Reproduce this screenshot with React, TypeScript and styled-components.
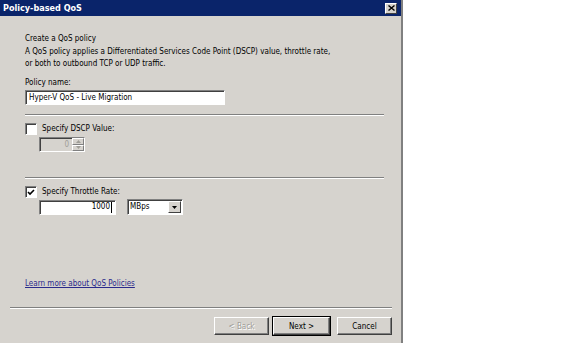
import * as React from 'react';
import styled, { createGlobalStyle } from 'styled-components';

const GlobalStyle = createGlobalStyle`
  html, body {
    margin: 0;
    padding: 0;
    background: #ffffff;
  }
  body {
    font-family: 'DejaVu Sans Condensed', 'DejaVu Sans', sans-serif;
    font-size: 8px;
    color: #000000;
  }
`;

const palette = {
  face: '#d6d3ce',
  shadow: '#808080',
  dark: '#404040',
  light: '#ffffff',
  navy: '#0a246a',
  link: '#2a2a8c',
  disabled: '#a09e98',
};

const DialogWindow = styled.div`
  width: 401px;
  height: 343px;
  background: ${palette.face};
  border-right: 2px solid ${palette.shadow};
  display: flex;
  flex-direction: column;
  box-sizing: content-box;
`;

const TitleBar = styled.div`
  height: 16px;
  background: ${palette.navy};
  display: flex;
  align-items: center;
  justify-content: space-between;
  padding: 0 3px 0 3px;
  .title {
    color: #ffffff;
    font-weight: bold;
    font-size: 9px;
  }
`;

const CloseButton = styled.div`
  width: 12px;
  height: 11px;
  box-sizing: border-box;
  background: ${palette.face};
  border: 1px solid;
  border-color: ${palette.light} ${palette.dark} ${palette.dark} ${palette.light};
  display: flex;
  align-items: center;
  justify-content: center;
  margin-right: 1px;
  svg {
    display: block;
  }
`;

const Body = styled.div`
  flex: 1;
  display: flex;
  flex-direction: column;
  padding: 17px 17px 0 25px;
`;

const Heading = styled.div`
  line-height: 12px;
  margin-bottom: 1px;
`;

const Description = styled.p`
  margin: 0 0 7px 0;
  line-height: 12px;
`;

const FieldLabel = styled.div`
  line-height: 12px;
  margin-bottom: 1px;
`;

const TextInput = styled.div<{ $width: number; $align?: 'left' | 'right' }>`
  width: ${(p) => p.$width}px;
  height: 15px;
  box-sizing: border-box;
  background: #ffffff;
  border: 1px solid;
  border-color: ${palette.shadow} ${palette.light} ${palette.light} ${palette.shadow};
  box-shadow: inset 1px 1px 0 ${palette.dark};
  display: flex;
  align-items: center;
  justify-content: ${(p) => (p.$align === 'right' ? 'flex-end' : 'flex-start')};
  padding: 0 3px;
  line-height: 12px;
  .caret {
    display: inline-block;
    width: 1px;
    height: 11px;
    background: #000000;
    margin-left: 1px;
  }
`;

const Separator = styled.div`
  height: 0;
  border-top: 1px solid ${palette.shadow};
  border-bottom: 1px solid ${palette.light};
`;

const CheckRow = styled.label`
  display: flex;
  align-items: center;
  gap: 5px;
  line-height: 12px;
`;

const CheckBox = styled.span`
  width: 12px;
  height: 12px;
  box-sizing: border-box;
  background: #ffffff;
  border: 1px solid;
  border-color: ${palette.shadow} ${palette.light} ${palette.light} ${palette.shadow};
  box-shadow: inset 1px 1px 0 ${palette.dark};
  display: flex;
  align-items: center;
  justify-content: center;
  svg {
    display: block;
  }
`;

const Indented = styled.div`
  padding-left: 14px;
  display: flex;
  align-items: center;
  gap: 11px;
`;

const SpinBox = styled.div`
  width: 46px;
  height: 15px;
  box-sizing: border-box;
  background: ${palette.face};
  border: 1px solid;
  border-color: ${palette.shadow} ${palette.light} ${palette.light} ${palette.shadow};
  box-shadow: inset 1px 1px 0 ${palette.dark};
  display: flex;
  .value {
    flex: 1;
    text-align: right;
    padding-right: 3px;
    color: ${palette.disabled};
    line-height: 13px;
  }
  .arrows {
    width: 12px;
    display: flex;
    flex-direction: column;
  }
`;

const SpinArrow = styled.div`
  flex: 1;
  box-sizing: border-box;
  border: 1px solid;
  border-color: ${palette.light} ${palette.shadow} ${palette.shadow} ${palette.light};
  background: ${palette.face};
  display: flex;
  align-items: center;
  justify-content: center;
  svg {
    display: block;
  }
`;

const Select = styled.div`
  width: 56px;
  height: 16px;
  box-sizing: border-box;
  background: #ffffff;
  border: 1px solid;
  border-color: ${palette.shadow} ${palette.light} ${palette.light} ${palette.shadow};
  box-shadow: inset 1px 1px 0 ${palette.dark};
  display: flex;
  align-items: center;
  .value {
    flex: 1;
    padding-left: 2px;
    line-height: 12px;
  }
`;

const DropButton = styled.div`
  width: 13px;
  height: 12px;
  margin-right: 1px;
  box-sizing: border-box;
  background: ${palette.face};
  border: 1px solid;
  border-color: ${palette.light} ${palette.dark} ${palette.dark} ${palette.light};
  display: flex;
  align-items: center;
  justify-content: center;
  svg {
    display: block;
  }
`;

const Spacer = styled.div<{ $h: number }>`
  height: ${(p) => p.$h}px;
  flex-shrink: 0;
`;

const HelpLink = styled.a`
  color: ${palette.link};
  text-decoration: underline;
  line-height: 12px;
  align-self: flex-start;
`;

const Footer = styled.div`
  padding: 9px 9px 0 10px;
  height: 36px;
  .buttons {
    margin-top: 8px;
    display: flex;
    justify-content: flex-end;
  }
`;

const PushButton = styled.button<{ $default?: boolean; $gap?: number }>`
  width: ${(p) => (p.$default ? 57 : 55)}px;
  height: 18px;
  margin-left: ${(p) => p.$gap || 0}px;
  box-sizing: border-box;
  padding: 0;
  font-family: 'DejaVu Sans Condensed', 'DejaVu Sans', sans-serif;
  font-size: 8px;
  color: #000000;
  background: ${palette.face};
  border: 1px solid;
  border-color: ${palette.light} ${palette.dark} ${palette.dark} ${palette.light};
  box-shadow: ${(p) =>
    p.$default
      ? `0 0 0 1px #000000, inset -1px -1px 0 ${palette.shadow}`
      : `inset -1px -1px 0 ${palette.shadow}`};
  &:disabled {
    color: ${palette.disabled};
    text-shadow: 1px 1px 0 #ffffff;
  }
`;

const App: React.FC = () => {
  return (
    <>
      <GlobalStyle />
      <DialogWindow>
        <TitleBar>
          <span className="title">Policy-based QoS</span>
          <CloseButton>
            <svg width="7" height="6" viewBox="0 0 7 6">
              <path d="M0.5 0.5 L6.5 5.5 M6.5 0.5 L0.5 5.5" stroke="#000" strokeWidth="1.4" />
            </svg>
          </CloseButton>
        </TitleBar>
        <Body>
          <Heading>Create a QoS policy</Heading>
          <Description>
            A QoS policy applies a Differentiated Services Code Point (DSCP) value, throttle rate,
            <br />
            or both to outbound TCP or UDP traffic.
          </Description>
          <FieldLabel>Policy name:</FieldLabel>
          <TextInput $width={200}>Hyper-V QoS - Live Migration</TextInput>
          <Spacer $h={9} />
          <Separator />
          <Spacer $h={7} />
          <CheckRow>
            <CheckBox />
            <span>Specify DSCP Value:</span>
          </CheckRow>
          <Spacer $h={2} />
          <Indented>
            <SpinBox>
              <span className="value">0</span>
              <div className="arrows">
                <SpinArrow>
                  <svg width="5" height="3" viewBox="0 0 5 3">
                    <path d="M2.5 0 L5 3 L0 3 Z" fill={palette.disabled} />
                  </svg>
                </SpinArrow>
                <SpinArrow>
                  <svg width="5" height="3" viewBox="0 0 5 3">
                    <path d="M0 0 L5 0 L2.5 3 Z" fill={palette.disabled} />
                  </svg>
                </SpinArrow>
              </div>
            </SpinBox>
          </Indented>
          <Spacer $h={25} />
          <Separator />
          <Spacer $h={7} />
          <CheckRow>
            <CheckBox>
              <svg width="8" height="7" viewBox="0 0 8 7">
                <path d="M1 3 L3 5 L7 1" stroke="#000" strokeWidth="1.6" fill="none" />
              </svg>
            </CheckBox>
            <span>Specify Throttle Rate:</span>
          </CheckRow>
          <Spacer $h={1} />
          <Indented>
            <TextInput $width={77} $align="right">
              1000<span className="caret" />
            </TextInput>
            <Select>
              <span className="value">MBps</span>
              <DropButton>
                <svg width="5" height="3" viewBox="0 0 5 3">
                  <path d="M0 0 L5 0 L2.5 3 Z" fill="#000" />
                </svg>
              </DropButton>
            </Select>
          </Indented>
          <Spacer $h={63} />
          <HelpLink>Learn more about QoS Policies</HelpLink>
        </Body>
        <Footer>
          <Separator />
          <div className="buttons">
            <PushButton disabled>&lt; Back</PushButton>
            <PushButton $default $gap={4}>Next &gt;</PushButton>
            <PushButton $gap={7}>Cancel</PushButton>
          </div>
        </Footer>
      </DialogWindow>
    </>
  );
};

export default App;
